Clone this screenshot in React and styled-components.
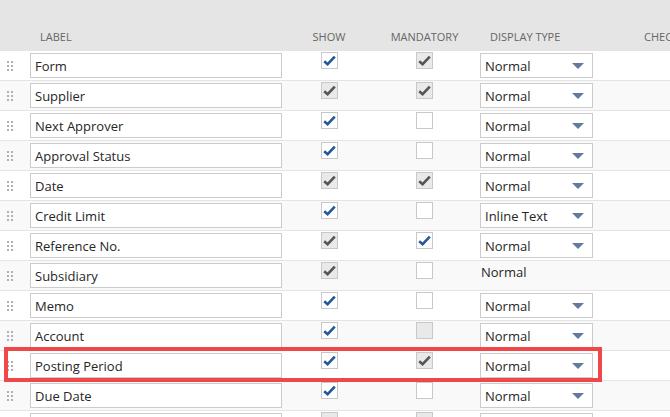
import React from 'react';
import styled, { createGlobalStyle } from 'styled-components';

const GlobalStyle = createGlobalStyle`
  html, body {
    margin: 0;
    padding: 0;
    background: #ffffff;
    overflow: hidden;
  }
  body {
    font-family: "Open Sans", "Liberation Sans", Arial, sans-serif;
  }
`;

const Page = styled.div`
  position: relative;
  width: 670px;
  height: 417px;
  overflow: hidden;
  background: #ffffff;
`;

const COLS = '30px 252px 94px 97px 161px 1fr';

const Header = styled.div`
  display: grid;
  grid-template-columns: ${COLS};
  align-items: end;
  height: 50px;
  padding-bottom: 6px;
  box-sizing: border-box;
  background: #e5e5e5;
`;

const HeadCell = styled.div`
  font-size: 11px;
  color: #666666;
  text-transform: uppercase;
  white-space: nowrap;
  overflow: hidden;
  text-align: ${(p) => p.$align || 'left'};
  padding-left: ${(p) => p.$pad || 0}px;
`;

const Row = styled.div`
  display: grid;
  grid-template-columns: ${COLS};
  align-items: start;
  height: 30px;
  box-sizing: border-box;
  border-top: 1px solid #e4e4e4;
  background: ${(p) => (p.$alt ? '#f9f9f9' : '#ffffff')};
`;

const Handle = styled.div`
  display: grid;
  grid-template-columns: 2px 2px;
  grid-template-rows: 2px 2px 2px;
  column-gap: 2px;
  row-gap: 2px;
  margin: 10px 0 0 7px;

  span {
    background: #b0b0b0;
  }
`;

const LabelInput = styled.div`
  height: 25px;
  margin-top: 2px;
  box-sizing: border-box;
  border: 1px solid #cccccc;
  background: #ffffff;
  padding-left: 4px;
  font-size: 13px;
  line-height: 24px;
  color: #262626;
  white-space: nowrap;
  overflow: hidden;
`;

const CheckCell = styled.div`
  display: flex;
  justify-content: center;
  padding-top: 1px;
`;

const Box = styled.div`
  width: 17px;
  height: 17px;
  box-sizing: border-box;
  border: 1px solid #c8c8c8;
  background: ${(p) => (p.$disabled ? '#e9e9e9' : '#ffffff')};
  display: flex;
  align-items: center;
  justify-content: center;
`;

const SelectBox = styled.div`
  display: flex;
  align-items: center;
  justify-content: space-between;
  width: 113px;
  height: 25px;
  margin: 2px 0 0 7px;
  box-sizing: border-box;
  border: 1px solid #cccccc;
  background: #ffffff;
  padding: 1px 8px 0 4px;
  font-size: 13px;
  color: #262626;
`;

const Arrow = styled.span`
  width: 0;
  height: 0;
  border-left: 6px solid transparent;
  border-right: 6px solid transparent;
  border-top: 6px solid #627a9e;
`;

const PlainText = styled.div`
  margin: 1px 0 0 8px;
  font-size: 13px;
  line-height: 20px;
  color: #262626;
`;

const Highlight = styled.div`
  position: absolute;
  left: 4px;
  top: 347px;
  width: 598px;
  height: 35px;
  box-sizing: border-box;
  border: 4px solid #f0474a;
  pointer-events: none;
`;

const Tick = ({ color }) => (
  <svg width="13" height="11" viewBox="0 0 13 11">
    <path d="M1.2 6.2 L4.6 9.2 L11.8 1.6" fill="none" stroke={color} strokeWidth="2.6" strokeLinejoin="miter" />
  </svg>
);

// state: 'on' blue tick, 'lock' grey tick on grey, 'off' empty, 'dis' empty grey
const Check = ({ state }) => (
  <CheckCell>
    <Box $disabled={state === 'lock' || state === 'dis'}>
      {state === 'on' && <Tick color="#24589a" />}
      {state === 'lock' && <Tick color="#555555" />}
    </Box>
  </CheckCell>
);

const rows = [
  { label: 'Form', show: 'on', mand: 'lock', type: 'Normal' },
  { label: 'Supplier', show: 'lock', mand: 'lock', type: 'Normal' },
  { label: 'Next Approver', show: 'on', mand: 'off', type: 'Normal' },
  { label: 'Approval Status', show: 'on', mand: 'off', type: 'Normal' },
  { label: 'Date', show: 'lock', mand: 'lock', type: 'Normal' },
  { label: 'Credit Limit', show: 'on', mand: 'off', type: 'Inline Text' },
  { label: 'Reference No.', show: 'lock', mand: 'on', type: 'Normal' },
  { label: 'Subsidiary', show: 'lock', mand: 'off', type: 'Normal', plain: true },
  { label: 'Memo', show: 'on', mand: 'off', type: 'Normal' },
  { label: 'Account', show: 'on', mand: 'dis', type: 'Normal' },
  { label: 'Posting Period', show: 'on', mand: 'lock', type: 'Normal' },
  { label: 'Due Date', show: 'on', mand: 'off', type: 'Normal' },
  { label: '', show: 'dis', mand: 'dis', type: '' },
];

const App = () => {
  return (
    <Page>
      <GlobalStyle />
      <Header>
        <div />
        <HeadCell $pad={10}>Label</HeadCell>
        <HeadCell $align="center">Show</HeadCell>
        <HeadCell $align="center">Mandatory</HeadCell>
        <HeadCell $pad={17}>Display Type</HeadCell>
        <HeadCell $pad={10}>Chec</HeadCell>
      </Header>
      {rows.map((r, i) => (
        <Row key={i} $alt={i % 2 === 1}>
          <Handle>
            <span /><span /><span /><span /><span /><span />
          </Handle>
          <LabelInput>{r.label}</LabelInput>
          <Check state={r.show} />
          <Check state={r.mand} />
          {r.plain ? (
            <PlainText>{r.type}</PlainText>
          ) : (
            <SelectBox>
              {r.type}
              <Arrow />
            </SelectBox>
          )}
          <div />
        </Row>
      ))}
      <Highlight />
    </Page>
  );
};

export default App;
